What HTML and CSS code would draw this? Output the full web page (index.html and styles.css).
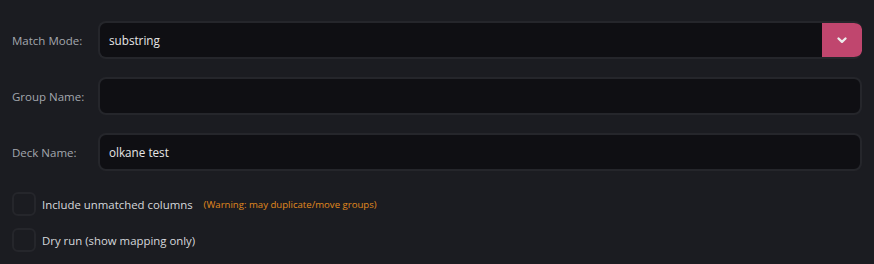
FILE: index.html
```html
<!DOCTYPE html>
<html lang="en">
<head>
<meta charset="utf-8">
<link rel="stylesheet" href="styles.css">
</head>
<body>
<div class="panel">
  <div class="row">
    <label class="label">Match Mode:</label>
    <div class="field select">
      <span class="value">substring</span>
      <span class="drop">
        <svg width="12" height="8" viewBox="0 0 12 8"><path d="M2.5 2.5 L6 5.8 L9.5 2.5" fill="none" stroke="#ececec" stroke-width="2.4" stroke-linecap="round" stroke-linejoin="round"/></svg>
      </span>
    </div>
  </div>
  <div class="row">
    <label class="label">Group Name:</label>
    <div class="field"><span class="value"></span></div>
  </div>
  <div class="row">
    <label class="label">Deck Name:</label>
    <div class="field"><span class="value">olkane test</span></div>
  </div>
  <div class="checks">
    <div class="check">
      <span class="box"></span>
      <span class="ctext">Include unmatched columns</span>
      <span class="warn">(Warning: may duplicate/move groups)</span>
    </div>
    <div class="check">
      <span class="box"></span>
      <span class="ctext">Dry run (show mapping only)</span>
    </div>
  </div>
</div>
</body>
</html>
```
FILE: styles.css
```css
* { box-sizing: border-box; }
html, body { margin: 0; padding: 0; background: #1b1c21; }
body { font-family: "Open Sans", "Noto Sans", sans-serif; }
.panel {
  padding: 21px 12px 0 12px;
  display: flex;
  flex-direction: column;
}
.row {
  display: flex;
  align-items: center;
  height: 38px;
  margin-bottom: 18px;
}
.label {
  width: 86px;
  font-size: 11.5px;
  color: #a3a7ae;
  flex: none;
}
.field {
  flex: 1;
  height: 38px;
  background: #0f0f13;
  border: 2px solid #25262b;
  border-radius: 8px;
  display: flex;
  align-items: center;
  padding-left: 9px;
  overflow: hidden;
}
.value {
  font-size: 11.7px;
  color: #e6e6e6;
  flex: 1;
}
.select { padding-right: 0; border-right: none; }
.drop {
  width: 40px;
  height: 38px;
  margin: -2px 0;
  background: #c0466e;
  border-radius: 0 8px 8px 0;
  display: flex;
  align-items: center;
  justify-content: center;
  flex: none;
}
.checks {
  display: flex;
  flex-direction: column;
  gap: 12px;
  padding-top: 3px;
}
.check {
  display: flex;
  align-items: center;
  height: 24px;
}
.box {
  width: 24px;
  height: 24px;
  border: 2px solid #25262b;
  border-radius: 6px;
  background: #1b1c21;
  flex: none;
  margin-right: 6px;
}
.ctext {
  font-size: 11.4px;
  color: #d6d8dc;
}
.warn {
  font-size: 9.6px;
  color: #e0891e;
  margin-left: 11px;
}
```
